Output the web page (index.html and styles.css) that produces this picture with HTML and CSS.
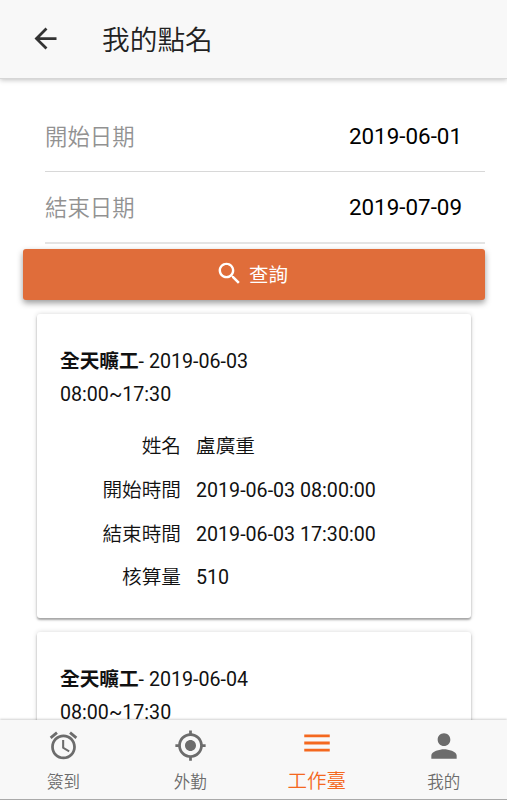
FILE: index.html
```
<!DOCTYPE html>
<html lang="zh-Hant">
<head>
    <meta charset="UTF-8">
    <meta name="viewport" content="width=device-width, initial-scale=1.0">
    <title>我的點名</title>
    <link rel="stylesheet" href="styles.css">
</head>
<body>
    <!-- Header -->
    <header class="navbar">
        <svg class="back-icon" viewBox="0 0 24 24"><path d="M20 11H7.83l5.59-5.59L12 4l-8 8 8 8 1.41-1.41L7.83 13H20v-2z"/></svg>
        <h1 class="title">我的點名</h1>
    </header>

    <!-- Content -->
    <main class="content">
        <div class="date-item">
            <span class="date-label">開始日期</span>
            <span class="date-value">2019-06-01</span>
        </div>
        <div class="date-item last">
            <span class="date-label">結束日期</span>
            <span class="date-value">2019-07-09</span>
        </div>

        <button class="search-button">
            <svg class="search-icon" viewBox="0 0 24 24"><path d="M15.5 14h-.79l-.28-.27C15.41 12.59 16 11.11 16 9.5 16 5.91 13.09 3 9.5 3S3 5.91 3 9.5 5.91 16 9.5 16c1.61 0 3.09-.59 4.23-1.57l.27.28v.79l5 4.99L20.49 19l-4.99-5zm-6 0C7.01 14 5 11.99 5 9.5S7.01 5 9.5 5 14 7.01 14 9.5 11.99 14 9.5 14z"/></svg>
            <span>查詢</span>
        </button>

        <section class="card">
            <div class="card-title"><b>全天曠工</b>- 2019-06-03<br>08:00~17:30</div>
            <dl class="detail">
                <dt>姓名</dt><dd class="name">盧廣重</dd>
                <dt>開始時間</dt><dd>2019-06-03 08:00:00</dd>
                <dt>結束時間</dt><dd>2019-06-03 17:30:00</dd>
                <dt>核算量</dt><dd>510</dd>
            </dl>
        </section>

        <section class="card">
            <div class="card-title"><b>全天曠工</b>- 2019-06-04<br>08:00~17:30</div>
        </section>
    </main>

    <!-- Tabs -->
    <nav class="tabbar">
        <a class="tab">
            <svg class="tab-icon" viewBox="0 0 24 24"><path d="M22 5.72l-4.6-3.86-1.29 1.53 4.6 3.86L22 5.72zM7.88 3.39L6.6 1.86 2 5.71l1.29 1.53 4.59-3.85zM12.5 8H11v6l4.75 2.85.75-1.23-4-2.37V8zM12 4c-4.97 0-9 4.03-9 9s4.02 9 9 9c4.97 0 9-4.03 9-9s-4.03-9-9-9zm0 16c-3.87 0-7-3.13-7-7s3.13-7 7-7 7 3.13 7 7-3.13 7-7 7z"/></svg>
            <span>簽到</span>
        </a>
        <a class="tab">
            <svg class="tab-icon" viewBox="0 0 24 24"><path d="M12 8c-2.21 0-4 1.79-4 4s1.79 4 4 4 4-1.79 4-4-1.79-4-4-4zm8.94 3c-.46-4.17-3.77-7.48-7.94-7.94V1h-2v2.06C6.83 3.52 3.52 6.83 3.06 11H1v2h2.06c.46 4.17 3.77 7.48 7.94 7.94V23h2v-2.06c4.17-.46 7.48-3.77 7.94-7.94H23v-2h-2.06zM12 19c-3.87 0-7-3.13-7-7s3.13-7 7-7 7 3.13 7 7-3.13 7-7 7z"/></svg>
            <span>外勤</span>
        </a>
        <a class="tab active">
            <svg class="tab-icon" viewBox="0 0 24 24"><path d="M3 18h18v-2H3v2zm0-5h18v-2H3v2zm0-7v2h18V6H3z"/></svg>
            <span>工作臺</span>
        </a>
        <a class="tab">
            <svg class="tab-icon person" viewBox="0 0 24 24"><path d="M12 12c2.21 0 4-1.79 4-4s-1.79-4-4-4-4 1.79-4 4 1.79 4 4 4zm0 2c-2.67 0-8 1.34-8 4v2h16v-2c0-2.66-5.33-4-8-4z"/></svg>
            <span>我的</span>
        </a>
    </nav>
</body>
</html>
```

FILE: styles.css
```
* {
    box-sizing: border-box;
}

body {
    font-family: Roboto, "Noto Sans CJK TC", sans-serif;
    margin: 0;
    height: 100vh;
    display: flex;
    flex-direction: column;
    overflow: hidden;
    background-color: #fff;
    color: #111;
}

svg {
    display: block;
    fill: currentColor;
    flex: none;
}

/* Header */
.navbar {
    position: relative;
    z-index: 2;
    flex: none;
    display: flex;
    align-items: center;
    height: 79px;
    padding: 0 29px 1px;
    background-color: #f8f8f8;
    border-bottom: 1px solid #d6d6d6;
    box-shadow: 0 1px 5px rgba(0, 0, 0, 0.25);
}

.back-icon {
    width: 33px;
    height: 33px;
    color: #333;
}

.title {
    margin: 5px 0 0 40px;
    font-size: 27.7px;
    font-weight: 350;
    line-height: 40px;
    color: #222;
}

/* Content */
.content {
    flex: 1;
    min-height: 0;
    overflow: hidden;
    padding: 22px 22px 0 23px;
}

.date-item {
    display: flex;
    align-items: center;
    justify-content: space-between;
    height: 71px;
    margin-left: 22px;
    padding-right: 23px;
    border-bottom: 1px solid #d8d8d8;
    font-size: 22.4px;
}

.date-item.last {
    height: 72px;
    border-bottom: 2px solid #e4e4e4;
}

.date-label {
    padding-bottom: 2px;
    font-weight: 350;
    color: #929292;
}

.date-value {
    color: #000;
}

.search-button {
    display: flex;
    align-items: center;
    justify-content: center;
    gap: 5px;
    width: 100%;
    height: 51px;
    margin-top: 5px;
    padding: 0 5px 2px 0;
    border: none;
    border-radius: 3px;
    background-color: #e06d3a;
    box-shadow: 0 3px 6px rgba(0, 0, 0, 0.4);
    color: #fff;
    font-family: inherit;
    font-size: 19.5px;
}

.search-button span {
    padding-bottom: 1px;
}

.search-icon {
    width: 29px;
    height: 29px;
}

.card {
    height: 304px;
    margin: 14px 14px 0;
    padding: 31px 23px 0;
    border-radius: 3px;
    background-color: #fff;
    box-shadow: 0 2px 2px rgba(0, 0, 0, 0.3), 0 0 5px rgba(0, 0, 0, 0.16);
    font-size: 19.65px;
}

.card-title {
    line-height: 33px;
}

.detail {
    display: grid;
    grid-template-columns: 121px 1fr;
    column-gap: 15px;
    margin: 14px 0 0;
    line-height: 43.8px;
}

.detail dt {
    text-align: right;
    font-weight: 350;
}

.detail dd {
    margin: 0;
}

.detail .name {
    font-weight: 350;
}

/* Tabs */
.tabbar {
    position: relative;
    z-index: 2;
    flex: none;
    display: flex;
    height: 80px;
    background-color: #f8f8f8;
    border-bottom: 1px solid #aaa;
    box-shadow: 0 -1px 2px rgba(0, 0, 0, 0.18);
}

.tab {
    flex: 1;
    display: flex;
    flex-direction: column;
    align-items: center;
    justify-content: space-between;
    padding: 9px 0 4px;
    color: #6c6c6c;
    font-size: 16.5px;
    font-weight: 350;
    line-height: 24px;
}

.tab-icon {
    width: 33px;
    height: 33px;
}

.tab-icon.person {
    width: 38px;
    height: 38px;
    margin-top: -2px;
}

.tab.active {
    padding-top: 6px;
    padding-bottom: 5px;
    color: #f4681f;
    font-size: 19.5px;
}

.tab.active .tab-icon {
    width: 34px;
    height: 34px;
}
```
